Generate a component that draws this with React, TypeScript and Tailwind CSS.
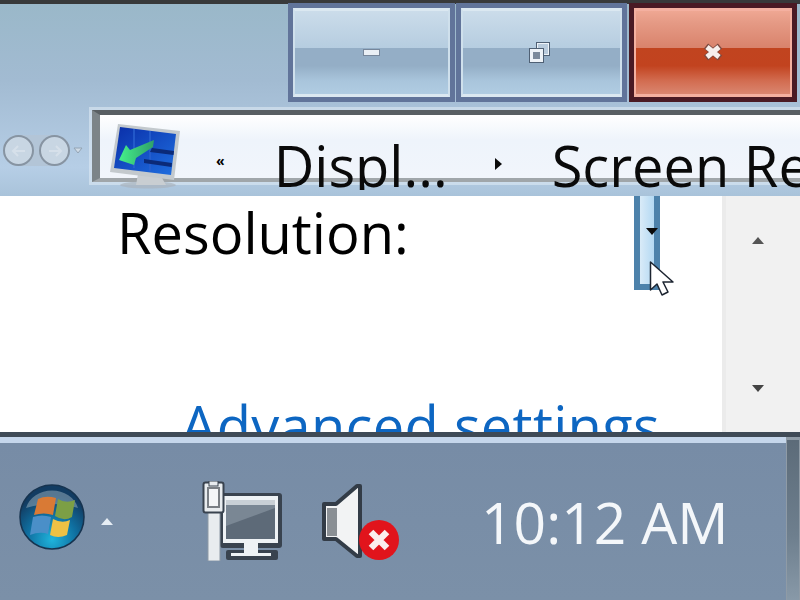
function CaptionButton({ kind, className }: { kind: "min" | "restore" | "close"; className: string }) {
  const close = kind === "close";
  return (
    <div
      className={`relative h-[99px] border-[5px] ${close ? "border-[#4a1a24]" : "border-[#61749a]"} ${className}`}
    >
      <div
        className={`flex h-full w-full items-center justify-center border-x-2 border-t-[3px] border-b-[3px] ${
          close
            ? "border-[#f4b0a0] bg-[linear-gradient(to_bottom,#efa793_0%,#e59a85_14%,#d9836c_44%,#c1441f_45%,#c2431f_66%,#d26c50_84%,#da8670_100%)]"
            : "border-x-[#cfe0ec] border-t-[#dbe8f1] border-b-[#dbe8f1] bg-[linear-gradient(to_bottom,#cbdcea_0%,#b6cde0_44%,#94aec6_45%,#94aec6_66%,#a9c5dc_84%,#b0cce2_100%)]"
        }`}
      >
        {kind === "min" && <div className="h-[7px] w-[17px] border border-[#77879b] bg-[#e9eff5]" />}
        {kind === "restore" && (
          <svg width="21" height="21" viewBox="0 0 21 21" className="mr-[4px] mb-[1px]">
            <rect x="7.5" y="0.5" width="13" height="13" fill="#b9cbdc" stroke="#4f6074" />
            <rect x="8.5" y="1.5" width="11" height="11" fill="none" stroke="#eef3f8" />
            <rect x="0.5" y="6.5" width="14" height="14" fill="#eef3f8" stroke="#4f6074" />
            <rect x="4" y="10" width="7" height="7" fill="#7b8a9c" />
          </svg>
        )}
        {kind === "close" && (
          <svg width="20" height="18" viewBox="0 0 20 18" className="mb-[1px]">
            <path d="M3 3 L17 15 M17 3 L3 15" stroke="#7d4a40" strokeWidth="6.5" />
            <path d="M4 4 L16 14 M16 4 L4 14" stroke="#f7efec" strokeWidth="5" />
          </svg>
        )}
      </div>
    </div>
  );
}

function NavCircle({ flip }: { flip?: boolean }) {
  return (
    <div className="flex h-[31px] w-[31px] items-center justify-center rounded-full border-2 border-[#8794a2] bg-[#c8d6e3]">
      <svg width="16" height="14" viewBox="0 0 16 14" className={flip ? "-scale-x-100" : ""}>
        <path d="M7 2 L2 7 L7 12 M2 7 L14 7" fill="none" stroke="#d6e0ea" strokeWidth="2" />
      </svg>
    </div>
  );
}

function MonitorIcon() {
  return (
    <svg width="72" height="66" viewBox="0 0 72 66" className="mt-[9px] shrink-0">
      <defs>
        <linearGradient id="scr" x1="0" y1="0" x2="1" y2="1">
          <stop offset="0%" stopColor="#0a2ea8" />
          <stop offset="100%" stopColor="#1f6fe0" />
        </linearGradient>
        <linearGradient id="arw" x1="0" y1="0" x2="1" y2="0">
          <stop offset="0%" stopColor="#45f08a" />
          <stop offset="100%" stopColor="#2f9f6a" />
        </linearGradient>
      </defs>
      <ellipse cx="38" cy="61" rx="28" ry="3.5" fill="#a9b4bd" opacity="0.7" />
      <path d="M28 50 L52 54 L56 61 L26 61 Z" fill="#c9ced2" />
      <path d="M8 0 L70 7 L64 56 L0 48 Z" fill="#c3c9cd" />
      <path d="M10 3 L66 10 L61 51 L4 44 Z" fill="url(#scr)" />
      <path d="M24 5 L24 44 M40 7 L40 47" stroke="#2a62d0" strokeWidth="1.5" />
      <path d="M42 24 L64 27 L63.5 31 L40 28 Z M34 35 L62 39 L61.5 43 L34 39 Z" fill="#0b2a78" />
      <path d="M9 36 L16 21 L20 26 L44 16 L43 23 L26 34 L24 41 Z" fill="url(#arw)" />
    </svg>
  );
}

function StartOrb() {
  return (
    <svg width="66" height="66" viewBox="0 0 66 66" className="shrink-0">
      <defs>
        <radialGradient id="orb" cx="50%" cy="85%" r="70%">
          <stop offset="0%" stopColor="#1fb4dc" />
          <stop offset="55%" stopColor="#0f6fa0" />
          <stop offset="100%" stopColor="#123c62" />
        </radialGradient>
      </defs>
      <circle cx="33" cy="33" r="32" fill="url(#orb)" stroke="#16334f" strokeWidth="1.5" />
      <path d="M7 24 A27 24 0 0 1 59 24 Q33 16 7 24 Z" fill="#8fa7b8" opacity="0.55" />
      <path d="M19 15 Q27 11 37 14 L34 31 Q25 28 15 31 Z" fill="#d97a35" />
      <path d="M39 15 Q47 20 56 16 L53 33 Q45 38 36 32 Z" fill="#7c9f45" />
      <path d="M14 33 Q23 30 32 33 L29 50 Q21 47 11 51 Z" fill="#4a8fc8" />
      <path d="M34 35 Q43 40 51 36 L48 51 Q39 55 31 51 Z" fill="#eec144" />
    </svg>
  );
}

function NetworkIcon() {
  return (
    <svg width="80" height="80" viewBox="0 0 80 80" className="shrink-0">
      <rect x="18" y="12" width="62" height="55" rx="3" fill="#39434f" />
      <rect x="21" y="15" width="55" height="47" fill="#eef2f5" />
      <rect x="24" y="19" width="49" height="39" fill="#5d6a78" />
      <path d="M24 19 H73 V27 L24 45 Z" fill="#7a8794" />
      <rect x="24" y="19" width="49" height="5" fill="#c9d0d6" />
      <rect x="24" y="69" width="52" height="10" rx="2" fill="#39434f" />
      <rect x="42" y="62" width="14" height="10" fill="#eef2f5" />
      <rect x="29" y="72" width="40" height="3" fill="#eef2f5" />
      <rect x="6" y="26" width="12" height="54" fill="#e8ecef" stroke="#8d99a5" />
      <rect x="1.5" y="1.5" width="20" height="30" rx="2" fill="#e8ecef" stroke="#39434f" strokeWidth="2" />
      <rect x="6" y="7" width="11" height="19" fill="#f4f6f8" stroke="#7a7f85" strokeWidth="2" />
      <rect x="7" y="0" width="9" height="5" fill="#e8ecef" stroke="#39434f" />
    </svg>
  );
}

function SpeakerIcon() {
  return (
    <svg width="80" height="78" viewBox="0 0 80 78" className="shrink-0">
      <path
        d="M2 20 H14 L35 2 H38 V72 H35 L14 55 H2 Z"
        fill="#f2f3f4"
        stroke="#333c47"
        strokeWidth="4"
        strokeLinejoin="round"
      />
      <rect x="5" y="24" width="10" height="28" fill="#8a8f94" />
      <circle cx="57" cy="56" r="20" fill="#e1141c" />
      <path d="M49 48 L65 64 M65 48 L49 64" stroke="#fbeeee" strokeWidth="6.5" />
    </svg>
  );
}

export default function App() {
  return (
    <div className="flex h-[600px] w-[800px] flex-col overflow-hidden bg-white font-['Open_Sans','Noto_Sans',sans-serif]">
      {/* title bar and address strip */}
      <div className="flex h-[196px] shrink-0 flex-col border-t-[4px] border-[#38393a] bg-[linear-gradient(to_bottom,#9ab8c9_0%,#a2bbd2_40%,#b6cee6_85%,#a9c3da_100%)]">
        <div className="flex h-[106px] shrink-0 justify-end pr-[3px]">
          <CaptionButton kind="min" className="-mt-[1px] w-[167px]" />
          <CaptionButton kind="restore" className="-mt-[1px] ml-[1px] w-[171px]" />
          <CaptionButton kind="close" className="-mt-[1px] ml-[2px] w-[168px]" />
        </div>
        <div className="flex min-h-0 flex-1 items-start">
          <div className="flex w-[92px] shrink-0 items-center pt-[25px] pl-[3px]">
            <div className="flex gap-[5px] rounded-full bg-[#b3c5d7]">
              <NavCircle />
              <NavCircle flip />
            </div>
            <svg width="10" height="8" viewBox="0 0 10 8" className="ml-[3px]">
              <path d="M1 1 H9 L5 6 Z" fill="#cfdbe6" stroke="#93a4b4" />
            </svg>
          </div>
          <div className="flex h-[72px] min-w-0 flex-1 items-start border-t-[5px] border-b-[4px] border-l-[8px] border-t-[#595f63] border-b-[#a0a6aa] border-l-[#7c8488] bg-[linear-gradient(to_bottom,#ffffff_0%,#eef4fb_40%,#f1f5fb_100%)] shadow-[0_0_0_3px_rgba(226,236,245,0.55)]">
            <div className="ml-[10px] shrink-0">
              <MonitorIcon />
            </div>
            <span className="ml-[34px] mt-[39px] shrink-0 text-[14px] leading-[14px] font-bold text-black">«</span>
            <span className="ml-[49px] mt-[4px] h-[71px] shrink-0 overflow-hidden text-[56px] leading-[92px] text-[#0a0a0a]">
              Displ...
            </span>
            <svg width="7" height="12" viewBox="0 0 7 12" className="ml-[47px] mt-[43px] shrink-0">
              <path d="M0 0 L7 6 L0 12 Z" fill="#0a0a0a" />
            </svg>
            <span className="ml-[50px] mt-[4px] h-[71px] shrink-0 overflow-hidden whitespace-nowrap text-[56px] leading-[92px] text-[#0a0a0a]">
              Screen Resolution
            </span>
          </div>
        </div>
      </div>

      {/* page content and scrollbar */}
      <div className="relative flex min-h-0 flex-1 overflow-hidden">
        <div className="flex min-w-0 flex-1 flex-col">
          <div className="flex items-start">
            <span className="ml-[117px] mt-[-1px] w-[296px] shrink-0 text-[56px] leading-[74px] whitespace-nowrap text-black">Resolution:</span>
            <div className="ml-[221px] flex h-[94px] w-[26px] shrink-0 justify-start border-x-[6px] border-b-[6px] border-[#4d82ab] bg-[linear-gradient(to_right,#d9ebf8,#b4d9f3)] pt-[32px]">
              <svg width="12" height="7" viewBox="0 0 12 7" className="ml-[6px] shrink-0">
                <path d="M0 0 H12 L6 7 Z" fill="#0a0a0a" />
              </svg>
            </div>
          </div>
          <a className="ml-[181px] mt-[98px] whitespace-nowrap text-[56px] leading-[74px] tracking-[0.3px] text-[#0d66c2]">
            Advanced settings
          </a>
        </div>
        <div className="flex w-[78px] shrink-0 flex-col items-center border-l-[4px] border-[#ebebeb] bg-[#f1f1f1] pt-[41px] pr-[10px]">
          <svg width="12" height="7" viewBox="0 0 12 7">
            <path d="M6 0 L12 7 H0 Z" fill="#555" />
          </svg>
          <svg width="12" height="7" viewBox="0 0 12 7" className="mt-[141px]">
            <path d="M0 0 H12 L6 7 Z" fill="#444" />
          </svg>
        </div>
        {/* mouse pointer */}
        <svg width="26" height="36" viewBox="0 0 26 36" className="absolute left-[649px] top-[65px]">
          <path
            d="M1.5 1 V29 L8 23 L13 34 L19 31 L14 21 L24 21 Z"
            fill="#ffffff"
            stroke="#1c2430"
            strokeWidth="1.5"
            strokeLinejoin="round"
          />
        </svg>
      </div>

      {/* taskbar */}
      <div className="flex h-[168px] shrink-0 border-t-[5px] border-[#3f4a56] bg-[#7b90a8]">
        <div className="flex min-w-0 flex-1 flex-col">
          <div className="h-[6px] shrink-0 bg-[#c5d6eb]" />
          <div className="flex flex-1 items-start bg-[linear-gradient(to_bottom,#778ca6,#7b90a8)]">
            <div className="ml-[19px] mt-[41px]">
              <StartOrb />
            </div>
            <svg width="12" height="7" viewBox="0 0 12 7" className="ml-[16px] mt-[75px] shrink-0">
              <path d="M6 0 L12 7 H0 Z" fill="#e6edf4" />
            </svg>
            <div className="ml-[89px] mt-[38px]">
              <NetworkIcon />
            </div>
            <div className="ml-[40px] mt-[41px]">
              <SpeakerIcon />
            </div>
            <span className="ml-[79px] mt-[39px] whitespace-nowrap text-[57px] leading-[80px] text-[#f4f7fa]">
              10:12 AM
            </span>
          </div>
        </div>
        <div className="w-[14px] shrink-0 border-x border-t-[3px] border-[#8f9ba6] bg-[linear-gradient(to_bottom,#5c6b79,#6e7f8e_60%,#8899a8)]" />
      </div>
    </div>
  );
}
